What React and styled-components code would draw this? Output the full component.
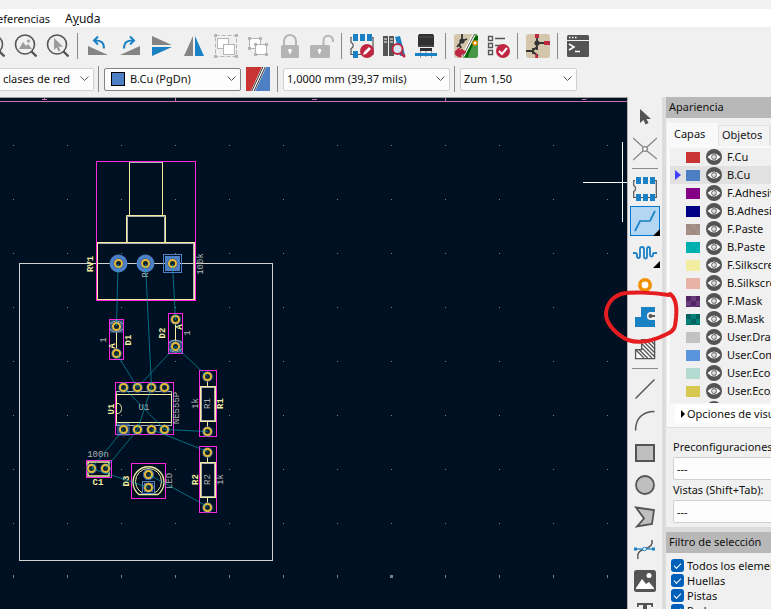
import React from "react";
import styled, { createGlobalStyle } from "styled-components";

const BLUE = "#1a81c4";
const DARK = "#545454";
const GREY = "#848484";
const CRIMSON = "#bf2641";
const MAGENTA = "#ff26e2";
const SILK = "#f2eda1";
const FAB = "#afafaf";
const COPPER = "#4d7fc4";

const GlobalStyle = createGlobalStyle`
  *, *::before, *::after { box-sizing: border-box; }
  body {
    margin: 0;
    background: #f0f0f0;
    color: #111;
    font: 11px/16px "Noto Sans", "Open Sans", sans-serif;
  }
  button, select, input { font: inherit; color: inherit; margin: 0; }
`;

const Window = styled.div`
  display: flex;
  flex-direction: column;
  height: 100vh;
  overflow: hidden;
  white-space: nowrap;
`;
const TitleStrip = styled.div`
  flex: none;
  height: 9px;
  background: #f3f2f2;
`;
const MenuBar = styled.nav`
  flex: none;
  display: flex;
  gap: 14px;
  height: 18px;
  margin-left: -4px;
  background: #fff;
`;
const MenuItem = styled.button`
  border: 0;
  padding: 0 0 0 1px;
  background: none;
  font-size: ${(p) => (p.$large ? "12px" : "11px")};
  line-height: 19px;
  white-space: pre;
`;
const ToolRow = styled.div`
  flex: none;
  display: flex;
  align-items: center;
  height: 38px;
  margin-left: -22px;
`;
const ToolButton = styled.button`
  flex: none;
  display: grid;
  place-items: center;
  width: 32px;
  height: 32px;
  padding: 0;
  border: 0;
  background: none;
`;
const Divider = styled.span`
  flex: none;
  width: 1px;
  height: 26px;
  margin: 0 4px 0 3px;
  background: #8c8c8c;
`;
const ComboDivider = styled(Divider)`
  margin: 0 5px 0 4px;
`;
const ComboRow = styled.div`
  flex: none;
  display: flex;
  align-items: center;
  height: 32px;
  padding-bottom: 4px;
`;
const ComboFrame = styled.div`
  flex: none;
  display: grid;
  grid-template-columns: ${(p) => (p.$swatch ? "19px 1fr" : "1fr")};
  align-items: center;
  width: ${(p) => p.$width};
  height: 23px;
  padding-left: ${(p) => (p.$swatch ? "6px" : "0")};
  border: 1px solid ${(p) => (p.$strong ? "#828282" : "#d0d0d0")};
  border-left-width: ${(p) => (p.$open ? "0" : "1px")};
  border-radius: ${(p) => (p.$open ? "0 2px 2px 0" : "2px")};
  background: #fdfdfd;
`;
const ComboSelect = styled.select`
  grid-row: 1;
  grid-column: -2;
  appearance: none;
  width: 100%;
  height: 100%;
  padding: 0 18px 0 ${(p) => (p.$inset ? p.$inset : "3px")};
  border: 0;
  background: none;
  outline: none;
`;
const Chevron = styled.svg`
  grid-row: 1;
  grid-column: -2;
  justify-self: end;
  margin-right: 4px;
  pointer-events: none;
`;
const CopperSwatch = styled.span`
  grid-row: 1;
  width: 14px;
  height: 14px;
  border: 1px solid #000;
  background: ${COPPER};
`;
const LayerPairButton = styled(ToolButton)`
  width: 24px;
  height: 24px;
  margin: 0 3px 0 5px;
`;

const Workspace = styled.main`
  position: relative;
  flex: 1;
  display: flex;
  min-height: 0;
`;
const CanvasArea = styled.section`
  flex: 1;
  min-width: 0;
  overflow: hidden;
  border-top: 1px solid #a0a0a0;
  border-right: 1px solid #b4b4b4;
  background: #001023;
`;
const BoardSvg = styled.svg`
  display: block;
  width: 100%;
  height: 100%;
`;
const SideTools = styled.aside`
  flex: none;
  display: flex;
  flex-direction: column;
  align-items: center;
  width: 34px;
  padding-top: 4px;
  overflow: hidden;
`;
const SideButton = styled.button`
  flex: none;
  position: relative;
  display: grid;
  place-items: center;
  width: 30px;
  height: 30px;
  margin: 1px 0;
  padding: 0;
  border: 1px solid ${(p) => (p.$active ? "#0078d4" : "transparent")};
  background: ${(p) => (p.$active ? "#b3d6f3" : "none")};
  &::after {
    content: ${(p) => (p.$menu ? '""' : "none")};
    position: absolute;
    right: -1px;
    bottom: -1px;
    border-left: 7px solid transparent;
    border-bottom: 7px solid #000;
  }
`;
const SideDivider = styled.span`
  flex: none;
  width: 26px;
  height: 1px;
  margin: 3px 0 4px;
  background: #8c8c8c;
`;
const Sash = styled.div`
  flex: none;
  width: 4px;
  background: #dcdcdc;
`;
const Panels = styled.aside`
  flex: none;
  display: flex;
  flex-direction: column;
  width: 105px;
  overflow: hidden;
`;
const PanelTitle = styled.h2`
  flex: none;
  margin: 0;
  padding-left: 3px;
  height: 21px;
  background: #b8b8b8;
  font: inherit;
  line-height: 20px;
`;
const Tabs = styled.div`
  flex: none;
  display: flex;
  align-items: flex-end;
  width: 160px;
  height: 28px;
  padding-left: 1px;
`;
const Tab = styled.button`
  width: ${(p) => (p.$active ? "51px" : "52px")};
  height: ${(p) => (p.$active ? "23px" : "21px")};
  padding: 0 0 3px ${(p) => (p.$active ? "6px" : "3px")};
  border: 1px solid ${(p) => (p.$active ? "#f9f9f9" : "#e2e2e2")};
  border-bottom: 0;
  background: ${(p) => (p.$active ? "#f9f9f9" : "#f3f3f3")};
  line-height: 18px;
  text-align: left;
`;
const TabBody = styled.div`
  flex: none;
  margin-left: 1px;
  padding: 2px 0 0 3px;
  border-bottom: 1px solid #dcdcdc;
  background: #f9f9f9;
`;
const LayerList = styled.ul`
  height: 255px;
  margin: 0;
  padding: 0;
  overflow: hidden;
  list-style: none;
  background: #f0f0f0;
`;
const LayerRow = styled.li`
  display: grid;
  grid-template-columns: 11px 14px 22px 1fr;
  align-items: center;
  height: 18px;
  padding-left: 5px;
  background: ${(p) => (p.$active ? "#e1e1e1" : "none")};
`;
const LayerColor = styled.button`
  width: 14px;
  height: 11px;
  padding: 0;
  border: 0;
  background: ${(p) =>
    p.$alt
      ? `conic-gradient(${p.$color} 25%, ${p.$alt} 0 50%, ${p.$color} 0 75%, ${p.$alt} 0) 0 0 / 10px 10px`
      : p.$color};
`;
const EyeButton = styled.button`
  display: block;
  width: 16px;
  height: 16px;
  padding: 0;
  border: 0;
  background: none;
  margin-left: 6px;
`;
const LayerName = styled.span`
  padding-left: 5px;
`;
const Disclosure = styled.button`
  display: flex;
  align-items: center;
  gap: 2px;
  width: 200px;
  height: 18px;
  margin: 2px 0 4px 5px;
  padding: 0 6px;
  border: 0;
  background: #fff;
`;
const Presets = styled.div`
  flex: none;
  display: flex;
  flex-direction: column;
  padding: 10px 0 4px 7px;
`;
const PresetLabel = styled.label`
  height: 19px;
  line-height: 18px;
  &:not(:first-child) { margin-top: 1px; }
`;
const HorizontalSash = styled.div`
  flex: none;
  height: 5px;
  background: #dcdcdc;
`;
const Filters = styled.div`
  flex: none;
  display: flex;
  flex-direction: column;
  padding: 5px 0 0 5px;
`;
const FilterLabel = styled.label`
  display: flex;
  align-items: center;
  gap: 3px;
  height: 15px;
`;
const FilterCheck = styled.input`
  appearance: none;
  flex: none;
  display: grid;
  place-items: center;
  width: 13px;
  height: 13px;
  border-radius: 3px;
  background: #005fb8;
  &::before {
    content: "";
    width: 7px;
    height: 4px;
    margin-top: -2px;
    border-left: 1px solid #fff;
    border-bottom: 1px solid #fff;
    transform: rotate(-45deg);
  }
`;
const MarkerSvg = styled.svg`
  position: absolute;
  right: 89px;
  top: 191px;
  pointer-events: none;
`;

const Icon = ({ children }) => (
  <svg width="24" height="24" viewBox="0 0 24 24" fill="none" aria-hidden="true">{children}</svg>
);
const Lens = ({ children }) => (
  <Icon>
    <circle cx="11" cy="10.500" r="9.500" stroke={DARK} strokeWidth="1.600" />
    {children}
    <path d="M17.500 17.500 22.500 22.500" stroke={DARK} strokeWidth="2.400" />
  </Icon>
);
const Corners = ({ points }) =>
  points.map(([x, y]) => <rect key={`${x}-${y}`} x={x - 1.5} y={y - 1.5} width="3" height="3" fill="#b4b4b4" />);

const ICONS = {
  zoomFit: <Lens />,
  zoomObjects: (
    <Lens>
      <path d="M5 15 9 8l3 4 2-2 4 5z" fill="#9b9b9b" />
      <circle cx="14.500" cy="7" r="1.500" fill="#9b9b9b" />
    </Lens>
  ),
  zoomSelection: <Lens><path d="M8 4v12l2.600-2.600 2 4 2-1-2-3.600H17z" fill="#9b9b9b" /></Lens>,
  rotateLeft: (
    <Icon>
      <path d="M2 12v9h20z" fill={GREY} />
      <path d="M8 6.500c7-.5 10 2 10 8" stroke={BLUE} strokeWidth="2" />
      <path d="M12 2.500 8 6.500l4 4" stroke={BLUE} strokeWidth="2" />
    </Icon>
  ),
  rotateRight: (
    <Icon>
      <path d="M22 12v9H2z" fill={GREY} />
      <path d="M16 6.500c-7-.5-10 2-10 8" stroke={BLUE} strokeWidth="2" />
      <path d="M12 2.500 16 6.500l-4 4" stroke={BLUE} strokeWidth="2" />
    </Icon>
  ),
  flipVertical: <Icon><path d="M2 2v9h20z" fill={GREY} /><path d="M2 22v-9h20z" fill={BLUE} /></Icon>,
  flipHorizontal: <Icon><path d="M2 22h9V2z" fill={GREY} /><path d="M22 22h-9V2z" fill={BLUE} /></Icon>,
  group: (
    <Icon>
      <rect x="1.500" y="1.500" width="21" height="21" stroke="#b4b4b4" strokeDasharray="4 2" />
      <rect x="3.500" y="4.500" width="11" height="10" fill="#fff" stroke="#b4b4b4" />
      <rect x="9.500" y="10.500" width="11" height="10" fill="#fff" stroke="#b4b4b4" />
      <Corners points={[[1.5, 1.5], [22.5, 1.5], [1.5, 22.5], [22.5, 22.5]]} />
    </Icon>
  ),
  ungroup: (
    <Icon>
      <rect x="3.500" y="4.500" width="11" height="10" fill="#fff" stroke="#b4b4b4" />
      <rect x="9.500" y="10.500" width="11" height="10" fill="#fff" stroke="#b4b4b4" />
      <Corners points={[[3.5, 4.5], [14.5, 4.5], [3.5, 14.5], [9.5, 10.5], [20.5, 10.5], [9.5, 20.5], [20.5, 20.5]]} />
    </Icon>
  ),
  lock: (
    <Icon>
      <path d="M6 11V7a6 6 0 0 1 12 0v4" stroke="#b4b4b4" strokeWidth="2" />
      <rect x="3" y="11" width="18" height="13" rx="1.500" fill="#b4b4b4" />
      <path d="M12 15v5" stroke="#fff" strokeWidth="1.500" /><circle cx="12" cy="16.500" r="1.800" fill="#fff" />
    </Icon>
  ),
  unlock: (
    <Icon>
      <path d="M13.500 12V6.500a4.700 4.700 0 0 1 9.400 0V8" stroke="#b4b4b4" strokeWidth="2" />
      <rect x="0" y="11" width="20" height="13" rx="1.500" fill="#b4b4b4" />
      <path d="M9.500 15v5" stroke="#fff" strokeWidth="1.500" /><circle cx="9.500" cy="16.500" r="1.800" fill="#fff" />
    </Icon>
  ),
  footprintEdit: (
    <Icon>
      <path d="M2 3.500h-1v5c3 1 3 5 0 6v6h22v-17h-3" stroke={DARK} strokeWidth="1.200" />
      <path d="M3 0h5v7H3zM10 0h5v7h-5zM17 0h5v7h-5zM3 17h5v7H3z" fill={BLUE} />
      <circle cx="17" cy="17" r="7" fill={CRIMSON} />
      <path d="m13 21 1-3 5-5 2 2-5 5z" fill="#fff" />
    </Icon>
  ),
  library: (
    <Icon>
      <path d="M1 2h5v20H1zM7 2h5v20H7z" fill={DARK} />
      <path d="M2 5h3M2 8h3M8 5h3M8 8h3" stroke="#fff" />
      <path d="m13 3 5-1 5 19-5 1z" fill={BLUE} />
      <circle cx="15.500" cy="15" r="5" fill="#d7e6f1" stroke={CRIMSON} strokeWidth="2" />
      <path d="m19 19 4 4" stroke={CRIMSON} strokeWidth="2.500" />
    </Icon>
  ),
  component: (
    <Icon>
      <path d="M6.500 14v9M12 17v6M17.500 14v9" stroke="#999" />
      <path d="M5 0h14l1 2v11H4V2z" fill="#303030" /><path d="M5 3h14M4 12h16" stroke="#565656" />
      <path d="M6 14h12v3H6z" fill="#303030" /><path d="M1 19h22v3H1z" fill={BLUE} />
      <path d="M6.500 22v2M17.500 22v2" stroke="#999" />
    </Icon>
  ),
  updateBoard: (
    <Icon>
      <rect width="24" height="24" rx="3" fill="#d3c6ab" />
      <path d="M20 0h1q3 0 3 3v18q0 3-3 3H9z" fill="#489648" />
      <path d="M24 4c-5 0-7 3-7 6s-4 5-5 13" stroke="#006400" strokeWidth="4" />
      <path d="m20 1-11 21" stroke="#fff" strokeWidth="3" /><path d="m20 1-11 21" stroke="#555" />
      <path d="M8 0v7M3 13l5-6 5-2M5 10l2 4" stroke="#333" strokeWidth="1.800" /><circle cx="8" cy="7" r="2.600" fill="#333" />
      <circle cx="21" cy="9" r="2" fill="#fff" stroke="#f29100" strokeWidth="1.500" />
      <path d="M6 14q-7 3-4 7 2 2 5 2v-2l5-3-5-3v2q-3-1-1-3z" fill={CRIMSON} stroke={CRIMSON} />
    </Icon>
  ),
  check: (
    <Icon>
      <path d="M2.500 2.500h4v4h-4zM2.500 9.500h4v4h-4zM2.500 16.500h4v4h-4zM9 4.500h10M9 11.500h6" stroke={DARK} strokeWidth="1.300" />
      <circle cx="17" cy="17" r="7" fill={CRIMSON} /><path d="m13 17 3 3 5-6" stroke="#fff" strokeWidth="2" />
    </Icon>
  ),
  schematic: (
    <Icon>
      <rect width="24" height="24" rx="3" fill="#d3c6ab" />
      <path d="M11 3v13M11 9h9M0 17h6l5-4M6 17l6 5M7 14v6" stroke="#333" strokeWidth="1.800" />
      <circle cx="11" cy="9" r="2.600" fill="#333" />
      <path d="M9 0h4v4H9zM18 7h6v4h-6zM10 19l2 3v2H9z" fill={CRIMSON} />
    </Icon>
  ),
  terminal: (
    <Icon>
      <rect x="1" y="1" width="22" height="22" rx="1.500" fill={DARK} /><path d="M1 6.500h22" stroke="#f0f0f0" />
      <path d="M3 3.500h1.500M6 3.500h1.500M9 3.500h1.500" stroke="#fff" strokeWidth="1.500" />
      <path d="m3 10 5 3-5 3M9 17.500h5" stroke="#fff" strokeWidth="1.500" />
    </Icon>
  ),
  layerPair: (
    <Icon>
      <path d="M0 0h18L8 24H0z" fill="#c83434" /><path d="M18 0h6v24H7z" fill={COPPER} />
      <path d="M18.500-1 6.500 25" stroke="#fff" strokeWidth="4" />
      <path d="M18.500-1 6.500 25" stroke="#222" strokeWidth="3" />
      <path d="M18.500-1 6.500 25" stroke="#fff" strokeWidth="1.300" />
    </Icon>
  ),
  cursor: <Icon><path d="M7 4v14l3.500-3 2 4.500 3-1.500-2-4H18z" fill={DARK} /></Icon>,
  ratsnest: (
    <Icon>
      <path d="m0 1 10 9M24 1 14 10M0 23l10-9M24 22l-10-8" stroke={GREY} strokeWidth="1.300" />
      <circle cx="12" cy="12" r="2.400" fill="#fff" stroke={GREY} strokeWidth="1.300" />
    </Icon>
  ),
  footprint: (
    <Icon>
      <path d="M2 3.500H.7v5c2.500 1 2.500 5 0 6v6h22.600v-17H22" stroke={DARK} strokeWidth="1.200" />
      <path d="M3 0h5v7H3zM10 0h5v7h-5zM17 0h5v7h-5zM3 17h5v7H3zM10 17h5v7h-5zM17 17h5v7h-5z" fill={BLUE} />
    </Icon>
  ),
  route: <Icon><path d="m2 22 5-10h10l5-10" stroke={BLUE} strokeWidth="1.700" /></Icon>,
  tune: (
    <Icon>
      <path d="M0 12h2q2 0 2 2v1q0 2 1.500 2T7 15V8q0-2 2-2t2 2v8q0 1.500 1.500 1.500T14 16V8q0-2 1.500-2T17 8v6q0 1.500 1.500 1.500T20 14v-1q0-1 2-1h2" stroke={BLUE} strokeWidth="1.800" />
    </Icon>
  ),
  via: <Icon><circle cx="12" cy="12" r="5.200" fill="#fff" stroke="#f29100" strokeWidth="3.600" /></Icon>,
  zone: (
    <Icon>
      <path d="M2 12h6V2h14v20H2z" fill={BLUE} />
      <path d="M22 7.800h-4a3.200 3.200 0 0 0 0 6.400h4" fill="#f0f0f0" stroke="#f0f0f0" strokeWidth="1.800" />
      <path d="M22 11h-4" stroke={DARK} strokeWidth="2" /><circle cx="17.500" cy="11" r="2" fill={DARK} />
      <path d="M18 15h4v3h-4zM18 4h4v3h-4z" fill={BLUE} />
    </Icon>
  ),
  ruleArea: (
    <Icon>
      <path d="M2.600 12.600h6v-10h13v19h-19z" fill="#fff" stroke={DARK} strokeWidth="1.300" />
      <path d="m3 13 8 8M6 12.500l9 9M9 11l10 10M9 7l13 13M9 3l13 13M13 3l9 9M17 3l5 5" stroke={DARK} strokeWidth="1.400" />
    </Icon>
  ),
  line: <Icon><path d="M2.500 21.500 21.500 2.500" stroke={DARK} strokeWidth="1.500" /></Icon>,
  arc: <Icon><path d="M2.500 21.500c0-12 7-19 19-19" stroke={DARK} strokeWidth="1.500" /></Icon>,
  rect: <Icon><rect x="3" y="4" width="18" height="16" fill="#bfbfbf" stroke={DARK} strokeWidth="2" /></Icon>,
  circle: <Icon><circle cx="12" cy="12" r="9" fill="#bfbfbf" stroke={DARK} strokeWidth="1.800" /></Icon>,
  polygon: <Icon><path d="m3 2.500 18 2.500-2 14-15 2.500 7-8z" fill="#bfbfbf" stroke={DARK} strokeWidth="1.800" /></Icon>,
  bezier: (
    <Icon>
      <path d="M5 22c-1-5 0-8 7-10 6-2 8-5 7-9" stroke={DARK} strokeWidth="1.500" />
      <path d="M2 12h19" stroke={BLUE} strokeWidth="1.300" /><path d="M1 10.500h3v3H1zM19 10.500h3v3h-3z" fill={BLUE} />
      <circle cx="11.500" cy="12" r="1.800" fill="#fff" stroke={BLUE} />
    </Icon>
  ),
  image: (
    <Icon>
      <rect x="1" y="1" width="22" height="22" rx="2.500" fill={DARK} />
      <path d="m3 19 6-9 4 5 3-2 5 6v1H3z" fill="#fff" /><circle cx="16" cy="6.500" r="2.500" fill="#fff" />
    </Icon>
  ),
  text: <Icon><path d="M4 2h16v4h-1.500l-.5-2h-4v16h-4V4H6l-.5 2H4z" fill={DARK} /></Icon>,
};

const TOP_TOOLS = [
  ["zoomFit", "Ajustar"], ["zoomObjects", "Ajustar a objetos"], ["zoomSelection", "Ajustar a selección"], null,
  ["rotateLeft", "Girar a la izquierda"], ["rotateRight", "Girar a la derecha"],
  ["flipVertical", "Voltear en vertical"], ["flipHorizontal", "Voltear en horizontal"],
  ["group", "Agrupar"], ["ungroup", "Desagrupar"], ["lock", "Bloquear"], ["unlock", "Desbloquear"], null,
  ["footprintEdit", "Editor de huellas"], ["library", "Bibliotecas"], ["component", "Visor 3D"], null,
  ["updateBoard", "Actualizar placa"], ["check", "Comprobar reglas"], null,
  ["schematic", "Esquema"], null, ["terminal", "Consola"],
];
const SIDE_TOOLS = [
  ["cursor", "Seleccionar"], ["ratsnest", "Conexiones"], null,
  ["footprint", "Añadir huella"], ["route", "Trazar pistas"], ["tune", "Ajustar longitud"],
  ["via", "Añadir vía"], ["zone", "Añadir zona"], ["ruleArea", "Área de reglas"], null,
  ["line", "Línea"], ["arc", "Arco"], ["rect", "Rectángulo"], ["circle", "Círculo"],
  ["polygon", "Polígono"], ["bezier", "Curva"], ["image", "Imagen"], ["text", "Texto"],
];
const LAYERS = [
  ["F.Cu", "#c83434"], ["B.Cu", "#4d7fc4"], ["F.Adhesivo", "#840084"], ["B.Adhesivo", "#000084"],
  ["F.Paste", "#a69189", "#9f8b84"], ["B.Paste", "#00b4b4", "#00abab"], ["F.Silkscreen", "#f2eda1"],
  ["B.Silkscreen", "#e8b2a7"], ["F.Mask", "#6b3b7d", "#502562"], ["B.Mask", "#02807a", "#02635e"],
  ["User.Drawings", "#c2c2c2"], ["User.Comments", "#5994dc"], ["User.Eco1", "#b4dbd2"],
  ["User.Eco2", "#d8c852"], ["Edge.Cuts", "#d0d2cd"],
];

const Combo = ({ label, value, width, strong, swatch, open, id, inset }) => (
  <ComboFrame $width={width} $strong={strong} $swatch={swatch} $open={open}>
    {swatch && <CopperSwatch />}
    <ComboSelect id={id} aria-label={label} defaultValue={value} $inset={inset}>
      <option>{value}</option>
    </ComboSelect>
    <Chevron width="9" height="6" viewBox="0 0 9 6" fill="none">
      <path d="m.5.5 4 4 4-4" stroke="#555" />
    </Chevron>
  </ComboFrame>
);

const Eye = () => (
  <svg width="16" height="16" viewBox="0 0 16 16" fill="none">
    <circle cx="8" cy="8" r="8" fill={DARK} />
    <path d="M1.500 8Q8 1 14.500 8 8 15 1.500 8Z" fill="#fff" />
    <circle cx="8" cy="8" r="2.300" stroke="#777" strokeWidth="1.200" />
    <circle cx="8" cy="8" r=".6" fill="#777" />
  </svg>
);

const Ring = ({ x, y }) => (
  <>
    <circle cx={x} cy={y} r="5.300" fill="#3c639e" />
    <circle cx={x} cy={y} r="3.500" fill="#0a2433" stroke="#e6b935" strokeWidth="2" />
  </>
);
const Pad = ({ x, y, shape, r = 6 }) => (
  <g>
    {shape === "round" && <circle cx={x} cy={y} r={r} fill={COPPER} />}
    {shape === "square" && (
      <>
        <rect x={x - r} y={y - r} width={2 * r} height={2 * r} fill="none" stroke={COPPER} />
        <rect x={x - r + 1.5} y={y - r + 1.5} width={2 * r - 3} height={2 * r - 3} fill={COPPER} />
      </>
    )}
    <Ring x={x} y={y} />
  </g>
);
const Tag = ({ x, y, fill = FAB, flat, children }) => (
  <text
    x={x}
    y={y}
    fill={fill}
    fontFamily='"Liberation Mono", monospace'
    fontSize="9"
    fontWeight={fill === SILK ? 700 : 400}
    textAnchor="middle"
    dominantBaseline="central"
    transform={flat ? undefined : `rotate(-90 ${x} ${y})`}
  >
    {children}
  </text>
);
const Courtyard = ({ x, y, w, h }) => <rect x={x} y={y} width={w} height={h} fill="none" stroke={MAGENTA} />;
const Resistor = ({ y, name, nameX, valueX }) => (
  <g>
    <path d={`M207.500 ${y + 6}v10M207.500 ${y + 51}v10`} stroke={SILK} />
    <rect x="201.500" y={y + 17} width="13" height="33" fill="none" stroke={FAB} />
    <rect x="200.500" y={y + 16} width="15" height="35" fill="none" stroke={SILK} />
    <Courtyard x={199.5} y={y} w={17} h={66} />
    <Pad x={207.5} y={y + 6} /><Pad x={207.5} y={y + 61} />
    <Tag x={208} y={y + 33}>{name}</Tag>
    <Tag x={nameX} y={y + 33} fill={SILK}>{name}</Tag>
    <Tag x={valueX} y={y + 33}>1k</Tag>
  </g>
);

const Board = () => (
  <BoardSvg aria-label="Placa de circuito">
    <defs>
      <pattern id="grid" x="13" y="145" width="54" height="54" patternUnits="userSpaceOnUse">
        <rect width="1" height="1" fill="#76808a" />
      </pattern>
    </defs>
    <g transform="translate(0 -98)">
      <rect y="110" width="100%" height="430" fill="url(#grid)" />
      {Array.from({ length: 12 }, (_, i) => (
        <rect key={i} x={13 + i * 54 - (i === 7 ? 1 : 0)} y="575" width={i === 7 ? 3 : 1} height="3" fill="#76808a" />
      ))}
      <path d="M0 101.500h5000M175.500 98v3M445.500 98v3M42 99.500h5M312 99.500h5M582 99.500h4l1-1M44.500 98v2" stroke="#c872b4" fill="none" />
      <rect x="19.500" y="263.500" width="253" height="297" fill="none" stroke="#d0d2cd" />

      <g fill="none" stroke={SILK}>
        <path d="M129.500 162.500h33M127.500 242v-25.500h37V242" stroke={FAB} />
        <rect x="97.500" y="243.500" width="96" height="56" stroke={FAB} />
        <path d="M129.500 215v-53.500h33V215M126.500 242v-26.500h39V242" />
        <rect x="96.500" y="242.500" width="98" height="57" />
      </g>
      <Courtyard x={96.5} y={161.5} w={99} h={139} />
      <path d="M97.500 299v-56.500h97V299.500h-97" fill="none" stroke={SILK} />
      <Pad x={118.5} y={263.5} shape="round" r={9} />
      <Pad x={145.5} y={263.5} shape="round" r={9} />
      <Pad x={172.5} y={263.5} shape="square" r={9} />
      <Tag x={91} y={264} fill={SILK}>RV1</Tag>
      <Tag x={201} y={264}>100k</Tag>
      <Tag x={146} y={275}>R</Tag>

      <path d="M116.500 331v18" stroke={SILK} />
      <path d="M110 324q6-6 13 0M110 329q6 6 13 0" stroke={SILK} fill="none" />
      <Courtyard x={109.5} y={319.5} w={14} h={40} />
      <Pad x={116.5} y={326.5} shape="square" r={5.5} /><Pad x={116.5} y={353.5} />
      <Tag x={129} y={340} fill={SILK}>D1</Tag><Tag x={104} y={340}>1</Tag><Tag x={113} y={346} fill={SILK}>A</Tag>

      <path d="M175.500 324v18" stroke={SILK} />
      <path d="M169 343q6-6 13 0M169 349q6 6 13 0" stroke={SILK} fill="none" />
      <Courtyard x={168.5} y={313.5} w={14} h={40} />
      <Pad x={175.5} y={319.5} /><Pad x={175.5} y={346.5} shape="square" r={5.5} />
      <Tag x={163} y={333} fill={SILK}>D2</Tag><Tag x={188} y={333}>1</Tag><Tag x={180} y={327} fill={SILK}>A</Tag>

      <rect x="116.500" y="391.500" width="55" height="34" fill="none" stroke={FAB} />
      <rect x="116.500" y="394.500" width="55" height="28" fill="none" stroke={SILK} />
      <path d="M117 403.500c6-1 6 11 0 10" fill="none" stroke={SILK} />
      <Courtyard x={115.5} y={382.5} w={58} h={52} />
      {[123.5, 137.5, 151.5, 164.5].map((x) => <Pad key={x} x={x} y={387.5} />)}
      <Pad x={123.5} y={429.5} shape="square" r={5.5} />
      {[137.5, 151.5, 164.5].map((x) => <Pad key={x} x={x} y={429.5} />)}
      <Tag x={112} y={409} fill={SILK}>U1</Tag><Tag x={177} y={408}>NE555P</Tag><Tag x={144} y={408} flat>U1</Tag>

      <Resistor y={370.5} name="R1" nameX={221} valueX={196} />
      <Resistor y={446.5} name="R2" nameX={196} valueX={221} />

      <rect x="88" y="462" width="21" height="14" fill="none" stroke={SILK} strokeWidth="1.500" />
      <Courtyard x={86.5} y={460.5} w={25} h={17} />
      <Pad x={91.5} y={468.5} /><Pad x={105.5} y={468.5} />
      <Tag x={98} y={455} flat>100n</Tag><Tag x={98} y={483} flat fill={SILK}>C1</Tag>

      <path d="M139 494.500a15.500 15.500 0 1 1 19 0z" fill="none" stroke={SILK} strokeWidth="1.300" />
      <circle cx="148.500" cy="481.500" r="13" fill="none" stroke={SILK} />
      <Courtyard x={131.5} y={463.5} w={34} h={35} />
      <Pad x={148.5} y={474.5} shape="round" r={5.5} /><Pad x={148.5} y={487.5} shape="square" r={6} />
      <Tag x={127} y={481} fill={SILK}>D3</Tag><Tag x={170} y={481}>LED</Tag>

      <path
        d="M118 264l-1.500 62M145.500 264l6 123M172.500 264l3 56M116.500 353.500l21 34M175.500 346.500l-38 41M175.500 346.500l32 30M123.500 387.500l41 42M151.500 387.500l-14 42M164.500 429.500l43 2M151.500 429.500l56 22M123.500 429.500l-32 39M137.500 429.500l-32 39M91.500 468.500l57 19M148.500 474.500l59 32"
        fill="none" stroke="#00b4c4" strokeOpacity=".56"
      />
      <path d="M583 182.500h5000M622.500 142v80" stroke="#fff" />
    </g>
  </BoardSvg>
);

export default function App() {
  return (
    <Window>
      <GlobalStyle />
      <TitleStrip />
      <MenuBar>
        <MenuItem>eferencias</MenuItem>
        <MenuItem $large>A<u>y</u>uda</MenuItem>
      </MenuBar>
      <ToolRow>
        {TOP_TOOLS.map((tool, i) =>
          tool ? <ToolButton key={i} aria-label={tool[1]}>{ICONS[tool[0]]}</ToolButton> : <Divider key={i} />
        )}
      </ToolRow>
      <ComboRow>
        <Combo label="Clases de red" value="clases de red" width="94px" open />
        <ComboDivider />
        <Combo label="Capa activa" value="B.Cu (PgDn)" width="137px" strong swatch inset="0" />
        <LayerPairButton aria-label="Par de capas">{ICONS.layerPair}</LayerPairButton>
        <ComboDivider />
        <Combo label="Rejilla" value="1,0000 mm (39,37 mils)" width="167px" />
        <ComboDivider />
        <Combo label="Zum" value="Zum 1,50" width="117px" />
      </ComboRow>
      <Workspace>
        <CanvasArea><Board /></CanvasArea>
        <SideTools>
          {SIDE_TOOLS.map((tool, i) =>
            tool ? (
              <SideButton
                key={i}
                aria-label={tool[1]}
                $active={tool[0] === "route"}
                $menu={tool[0] === "route" || tool[0] === "tune"}
              >
                {ICONS[tool[0]]}
              </SideButton>
            ) : <SideDivider key={i} />
          )}
        </SideTools>
        <Sash />
        <Panels>
          <PanelTitle>Apariencia</PanelTitle>
          <Tabs role="tablist">
            <Tab role="tab" aria-selected="true" $active>Capas</Tab>
            <Tab role="tab" aria-selected="false">Objetos</Tab>
            <Tab role="tab" aria-selected="false" aria-label="Redes" />
          </Tabs>
          <TabBody>
            <LayerList>
              {LAYERS.map(([name, color, alt]) => (
                <LayerRow key={name} $active={name === "B.Cu"}>
                  <svg width="6" height="10" viewBox="0 0 6 10">
                    {name === "B.Cu" && <path d="M0 0v10l6-5z" fill="#4040ff" />}
                  </svg>
                  <LayerColor aria-label={`Color de ${name}`} $color={color} $alt={alt} />
                  <EyeButton aria-label={`Mostrar ${name}`}><Eye /></EyeButton>
                  <LayerName>{name}</LayerName>
                </LayerRow>
              ))}
            </LayerList>
            <Disclosure>
              <svg width="4" height="8" viewBox="0 0 4 8"><path d="M0 0v8l4-4z" /></svg>
              Opciones de visualización
            </Disclosure>
          </TabBody>
          <Presets>
            <PresetLabel htmlFor="presets">Preconfiguraciones</PresetLabel>
            <Combo id="presets" value="---" width="180px" />
            <PresetLabel htmlFor="views">Vistas (Shift+Tab):</PresetLabel>
            <Combo id="views" value="---" width="180px" />
          </Presets>
          <HorizontalSash />
          <PanelTitle>Filtro de selección</PanelTitle>
          <Filters>
            {["Todos los elementos", "Huellas", "Pistas", "Pads"].map((name) => (
              <FilterLabel key={name}>
                <FilterCheck type="checkbox" defaultChecked />
                {name}
              </FilterLabel>
            ))}
          </Filters>
        </Panels>
        <MarkerSvg width="80" height="60" viewBox="602 288 80 60" fill="none" aria-hidden="true">
          <path
            d="M669 295C652 292 630 292 621 294 610 298 606 307 606 315 607 325 617 335 628 340 642 345 657 339 667 334 676 330 675 326 676 318 677 308 676 298 670 294"
            stroke="#e51d20" strokeWidth="4" strokeLinecap="round" strokeLinejoin="round"
          />
        </MarkerSvg>
      </Workspace>
    </Window>
  );
}
